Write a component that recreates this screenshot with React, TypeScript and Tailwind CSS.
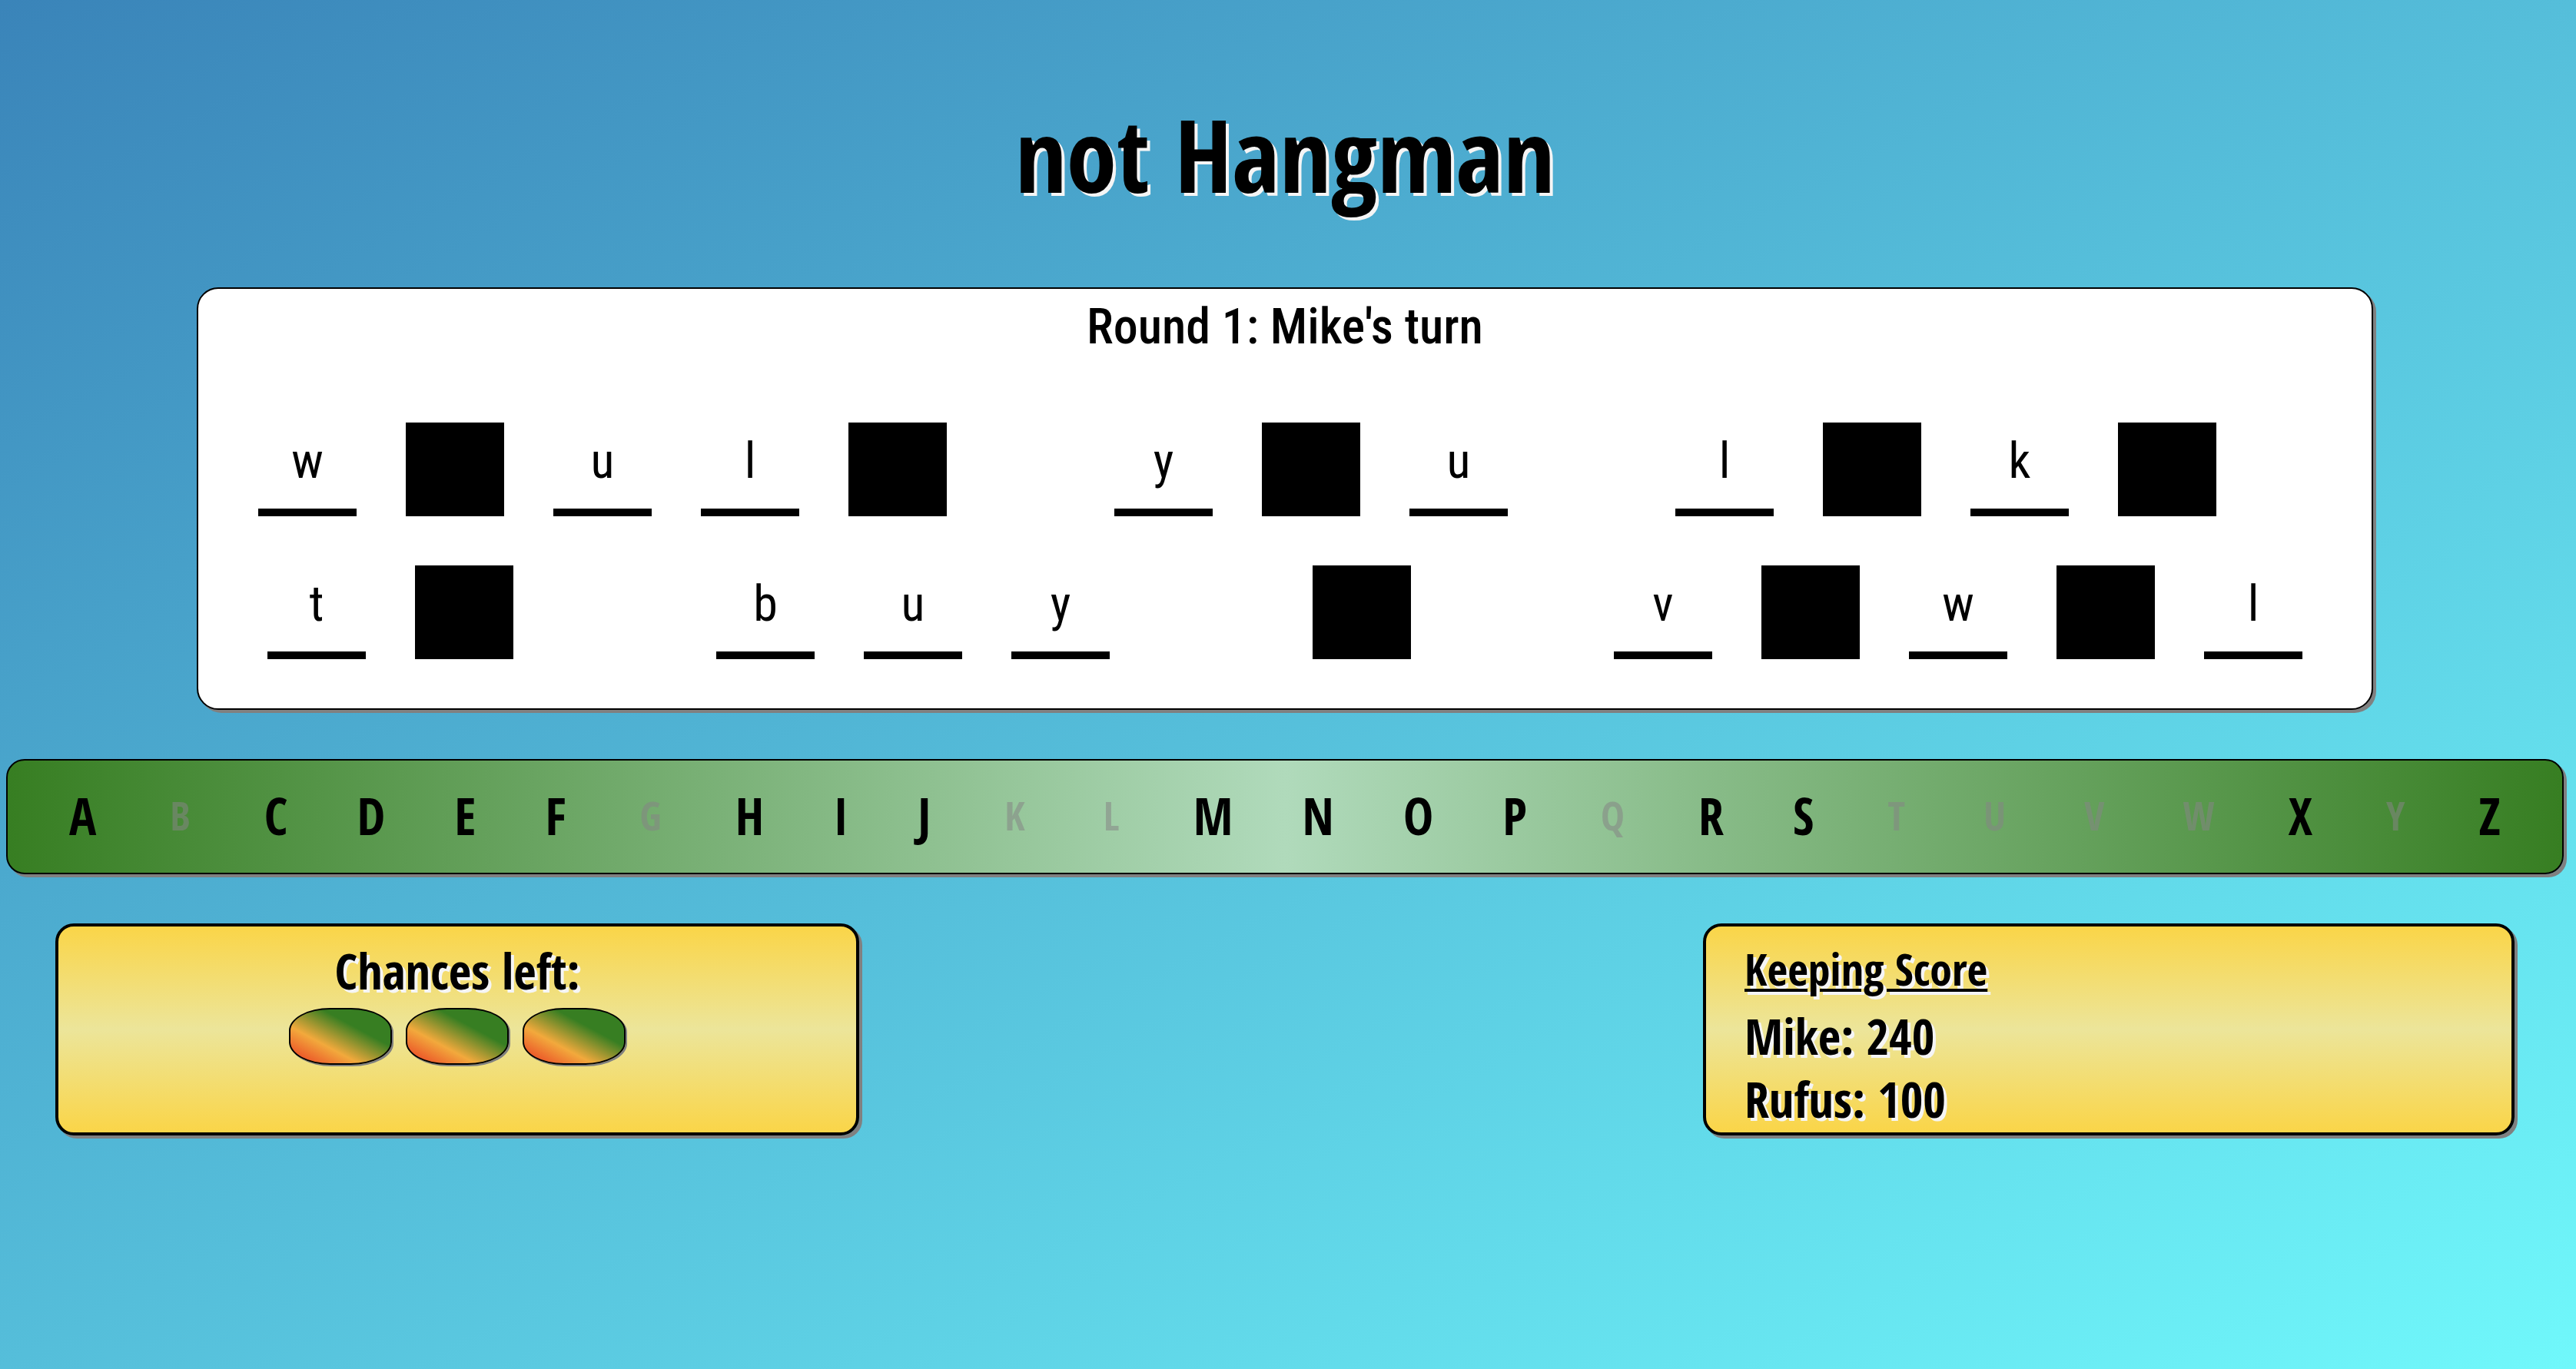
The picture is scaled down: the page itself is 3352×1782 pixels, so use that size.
const DISPLAY = "font-['Open_Sans_Condensed','Open_Sans',sans-serif] font-bold";
const HAND = "font-['Roboto_Condensed',Roboto,sans-serif]";

const ALPHABET = 'ABCDEFGHIJKLMNOPQRSTUVWXYZ'.split('');
const GUESSED = new Set('BGKLQTUVWY'.split(''));

/* An underscore marks a letter that is still hidden. */
const FIRST_ROW = ['w_ul_', 'y_u', 'l_k_'];
const SECOND_ROW = ['t_', 'buy', '_', 'v_w_l'];

const SCORES = [
  { name: 'Mike', points: 240 },
  { name: 'Rufus', points: 100 },
];

function Word({ word }: { word: string }) {
  return (
    <div className="flex gap-16">
      {word.split('').map((letter, i) =>
        letter === '_' ? (
          <div key={i} className="w-32 bg-black" />
        ) : (
          <div
            key={i}
            className="w-32 border-b-10 border-black pb-2.5 text-center text-[64px] leading-[102px] font-normal"
          >
            {letter}
          </div>
        ),
      )}
    </div>
  );
}

function Board() {
  return (
    <section
      className={`${HAND} mx-auto flex w-[85.1%] flex-col items-center rounded-[28px] border-2 border-black bg-white pt-[18px] pb-16 shadow-[4px_4px_gray]`}
    >
      <h2 className="mb-[92px] text-[64px] leading-none font-medium">Round 1: Mike's turn</h2>
      <div className="flex flex-col items-center gap-16">
        <div className="flex h-[122px] gap-[218px] pr-[124px]">
          {FIRST_ROW.map((word) => (
            <Word key={word} word={word} />
          ))}
        </div>
        <div className="flex h-[122px] gap-[264px]">
          {SECOND_ROW.map((word) => (
            <Word key={word} word={word} />
          ))}
        </div>
      </div>
    </section>
  );
}

function Keyboard() {
  return (
    <section className="mt-16 flex h-[150px] items-center justify-between rounded-[24px] border-2 border-black bg-linear-to-r/srgb from-[#377e22] via-[#b0dabb] to-[#377e22] px-20 pb-1 shadow-[4px_4px_gray]">
      {ALPHABET.map((letter) => (
        <button
          key={letter}
          type="button"
          disabled={GUESSED.has(letter)}
          className="text-[66px] leading-none text-black disabled:px-1.5 disabled:text-[52px] disabled:text-[#858585]/55"
        >
          {letter}
        </button>
      ))}
    </section>
  );
}

function Chance() {
  return (
    <li className="h-[74px] w-[134px] rounded-[40%] border-2 border-black bg-linear-to-tr/srgb from-[#eb4f27] from-8% via-[#f2a93c] via-34% to-[#377e22] to-66% shadow-[2px_2px_gray]" />
  );
}

const CARD =
  'rounded-[24px] border-4 border-black bg-linear-to-b/srgb from-[#fad548] via-[#ece59a] to-[#fad548] shadow-[4px_4px_gray] [text-shadow:4px_4px_whitesmoke]';

export default function App() {
  return (
    <main
      className={`${DISPLAY} min-h-screen bg-linear-to-br/srgb from-[#3a84b9] to-[#70f8fb] pt-[134px] pr-4 pl-2 text-black`}
    >
      <h1 className="mb-[108px] text-center text-[132px] leading-none [text-shadow:4px_4px_whitesmoke]">
        not Hangman
      </h1>
      <Board />
      <Keyboard />
      <div className="mx-16 mt-16 flex justify-between">
        <section className={`${CARD} flex w-[32.7%] flex-col items-center pt-[26px]`}>
          <h2 className="mb-4 text-[64px] leading-none">Chances left:</h2>
          <ul className="flex gap-[18px]">
            <Chance />
            <Chance />
            <Chance />
          </ul>
        </section>
        <section className={`${CARD} w-[33%] pt-[26px] pb-0.5 pl-[50px]`}>
          <h2 className="mb-[18px] text-[58px] leading-none underline decoration-4 underline-offset-4">
            Keeping Score
          </h2>
          {SCORES.map(({ name, points }) => (
            <p key={name} className="text-[64px] leading-[82px]">
              {name}: {points}
            </p>
          ))}
        </section>
      </div>
    </main>
  );
}
